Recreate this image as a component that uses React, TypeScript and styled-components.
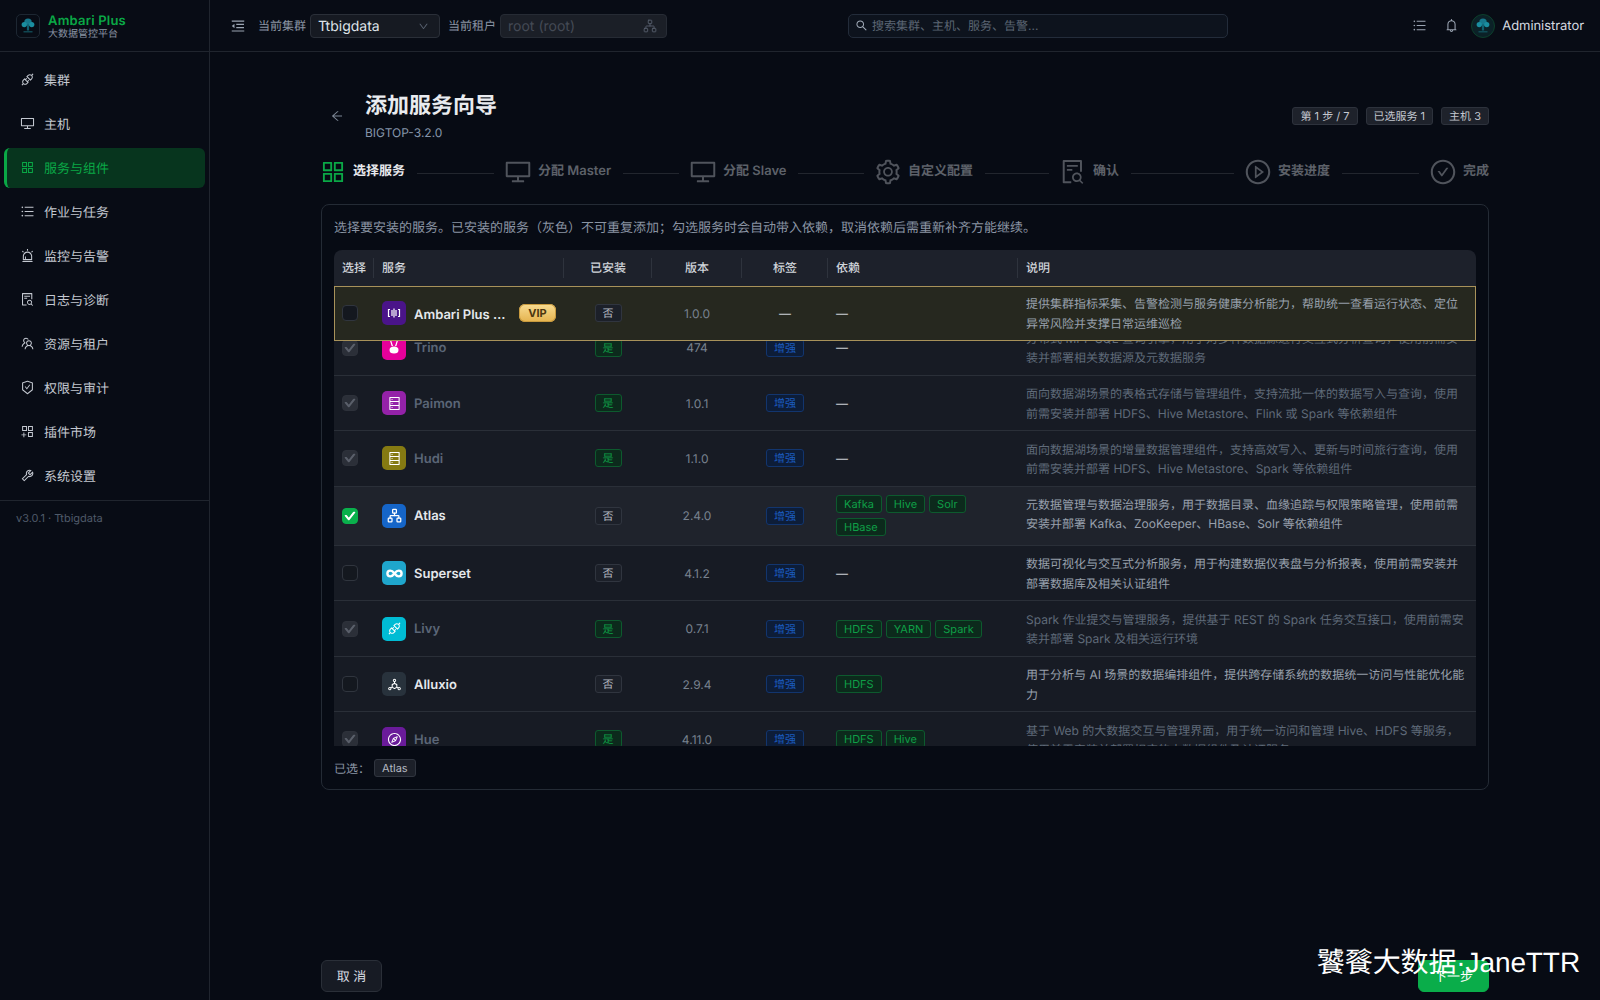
import React from 'react';
import styled, { createGlobalStyle } from 'styled-components';
import { Network } from 'lucide-react';
import {
    AiOutlineAlert,
    AiOutlineApi,
    AiOutlineAppstore,
    AiOutlineAppstoreAdd,
    AiOutlineArrowLeft,
    AiOutlineBell,
    AiOutlineCheck,
    AiOutlineCheckCircle,
    AiOutlineCompass,
    AiOutlineDatabase,
    AiOutlineDeploymentUnit,
    AiOutlineDesktop,
    AiOutlineDown,
    AiOutlineFileSearch,
    AiOutlineMenuFold,
    AiOutlinePlayCircle,
    AiOutlineSafetyCertificate,
    AiOutlineSearch,
    AiOutlineSetting,
    AiOutlineTeam,
    AiOutlineTool,
    AiOutlineUnorderedList,
} from 'react-icons/ai';

const GREEN = '#0aa846';

const GlobalStyle = createGlobalStyle`
  html, body {
    margin: 0;
    height: 100%;
    background: #070b14;
    overflow: hidden;
  }
  body, input, button {
    font-family: Inter, "Noto Sans CJK SC", sans-serif;
    text-rendering: geometricPrecision;
  }
  #root {
    height: 100%;
  }
  * {
    box-sizing: border-box;
  }
`;

const Shell = styled.div`
  display: flex;
  height: 1000px;
  position: relative;
  color: #d5d9e0;
`;

const Sidebar = styled.aside`
  width: 210px;
  flex: none;
  border-right: 1px solid #20252e;
  background: #080c15;
`;

const Brand = styled.div`
  height: 52px;
  display: flex;
  align-items: center;
  gap: 8px;
  padding: 0 16px;
  border-bottom: 1px solid #20252e;
`;

const BrandLogo = styled.div`
  width: 24px;
  height: 24px;
  display: flex;
  align-items: center;
  justify-content: center;
  border: 1px solid #1d2732;
  border-radius: 5px;
`;

const BrandText = styled.div`
  display: flex;
  flex-direction: column;
  padding-top: 2px;
`;

const BrandName = styled.span`
  color: ${GREEN};
  font-size: 13px;
  font-weight: 600;
  line-height: 14px;
  letter-spacing: 0.2px;
`;

const BrandSub = styled.span`
  color: #8a94a3;
  font-size: 10px;
  line-height: 12px;
`;

const NavList = styled.nav`
  display: flex;
  flex-direction: column;
  gap: 4px;
  padding: 8px 4px 4px;
  border-bottom: 1px solid #20252e;
`;

const NavItem = styled.div<{ $active?: boolean }>`
  height: 40px;
  display: flex;
  align-items: center;
  gap: 9px;
  padding-left: 13px;
  font-size: 13px;
  border-radius: 6px;
  color: ${({ $active }) => ($active ? GREEN : '#c3c8d0')};
  background: ${({ $active }) => ($active ? '#07351e' : 'transparent')};
  border-left: 3px solid ${({ $active }) => ($active ? GREEN : 'transparent')};
  svg {
    font-size: 15px;
    flex: none;
    margin-top: -1px;
  }
`;

const NavLabel = styled.span`
  padding-bottom: 2px;
`;

const SideVersion = styled.div`
  padding: 10px 16px;
  color: #4f5a69;
  font-size: 11px;
  line-height: 15px;
`;

const Main = styled.div`
  flex: 1;
  min-width: 0;
  display: flex;
  flex-direction: column;
`;

const TopBar = styled.header`
  height: 52px;
  flex: none;
  display: flex;
  align-items: center;
  padding: 0 16px 0 20px;
  border-bottom: 1px solid #20252e;
  background: #080c15;
`;

const Collapse = styled.span`
  display: flex;
  color: #9aa4b2;
  font-size: 16px;
  margin-right: 12px;
`;

const FieldLabel = styled.span`
  color: #8a94a3;
  font-size: 12px;
  margin-right: 4px;
`;

const Select = styled.div<{ $disabled?: boolean }>`
  height: 24px;
  width: ${({ $disabled }) => ($disabled ? '167px' : '130px')};
  margin-right: ${({ $disabled }) => ($disabled ? '0' : '8px')};
  display: flex;
  align-items: center;
  justify-content: space-between;
  padding: 1px ${({ $disabled }) => ($disabled ? '9px' : '10px')} 0 7px;
  border: 1px solid ${({ $disabled }) => ($disabled ? '#262b34' : '#2a2f38')};
  border-radius: 4px;
  background: ${({ $disabled }) => ($disabled ? '#1b1f27' : '#161a22')};
  color: ${({ $disabled }) => ($disabled ? '#444a55' : '#dfe3e9')};
  font-size: 14px;
  svg {
    color: #596170;
    font-size: 11px;
  }
`;

const Search = styled.div`
  width: 380px;
  height: 24px;
  margin-left: 181px;
  display: flex;
  align-items: center;
  gap: 4px;
  padding: 0 5px 0 6px;
  border: 1px solid #232c3a;
  border-radius: 5px;
  background: #0d131d;
  color: #5b6573;
  font-size: 12px;
  svg {
    color: #a3adba;
    font-size: 13px;
  }
`;

const TopActions = styled.div`
  margin-left: auto;
  display: flex;
  align-items: center;
  color: #9aa4b2;
  font-size: 15px;
  gap: 17px;
  svg {
    display: block;
  }
`;

const UserBlock = styled.div`
  display: flex;
  align-items: center;
  gap: 7px;
  margin-left: -5px;
  color: #d5d9e0;
  font-size: 13px;
  letter-spacing: -0.05px;
`;

const UserName = styled.span`
  padding-top: 1px;
`;

const Avatar = styled.div`
  width: 24px;
  height: 24px;
  display: flex;
  align-items: center;
  justify-content: center;
  border-radius: 50%;
  border: 1px solid #0c3f2b;
  background: #0b2127;
`;

const Content = styled.main`
  flex: 1;
  width: 1168px;
  margin: 0 auto;
  display: flex;
  flex-direction: column;
  padding: 38px 0 8px;
`;

const PageHead = styled.div`
  display: flex;
  align-items: center;
`;

const BackIcon = styled.span`
  display: flex;
  width: 44px;
  padding-left: 9px;
  color: #7d8795;
  font-size: 14px;
`;

const Titles = styled.div`
  flex: 1;
`;

const PageTitle = styled.h1`
  margin: 0;
  padding-top: 1px;
  color: #e9ebef;
  font-size: 22px;
  font-weight: 600;
  line-height: 30px;
`;

const PageSub = styled.div`
  margin-top: 3px;
  color: #8494a9;
  font-size: 12px;
  line-height: 18px;
`;

const HeadTags = styled.div`
  display: flex;
  gap: 8px;
`;

const HeadTag = styled.span`
  height: 18px;
  display: flex;
  align-items: center;
  padding: 0 7px;
  border: 1px solid #2d323c;
  border-radius: 3px;
  background: #1e222b;
  color: #c4c8d0;
  font-size: 11px;
`;

const Steps = styled.div`
  display: flex;
  margin-top: 18px;
  height: 24px;
`;

const Step = styled.div<{ $last?: boolean }>`
  flex: ${({ $last }) => ($last ? 'none' : '1 1 0')};
  display: flex;
  align-items: center;
  min-width: 0;
`;

const StepIcon = styled.span<{ $active?: boolean }>`
  width: 24px;
  height: 24px;
  display: flex;
  align-items: center;
  justify-content: center;
  flex: none;
  margin-right: 8px;
  color: ${({ $active }) => ($active ? GREEN : '#50545c')};
  font-size: 28px;
  svg {
    flex: none;
  }
`;

const StepLabel = styled.span<{ $active?: boolean }>`
  padding-bottom: 6px;
  white-space: nowrap;
  color: ${({ $active }) => ($active ? '#e6e8ec' : '#5d6169')};
  font-size: 13px;
  font-weight: 600;
`;

const StepLine = styled.span`
  flex: 1;
  height: 1px;
  margin: 2px 12px 0;
  background: #22262e;
`;

const Panel = styled.section`
  margin-top: 20px;
  padding: 12px 12px 12px;
  border: 1px solid #242b35;
  border-radius: 8px;
  background: #070b14;
`;

const Intro = styled.p`
  margin: 0 0 11px;
  color: #8a94a3;
  font-size: 13px;
  line-height: 22px;
`;

const COLUMNS = '40px 190px 88px 90px 86px 190px minmax(0, 1fr)';

const TableHead = styled.div`
  display: grid;
  grid-template-columns: ${COLUMNS};
  height: 36px;
  border-radius: 8px 8px 0 0;
  background: #1d212b;
`;

const HeadCell = styled.div<{ $center?: boolean; $divided?: boolean }>`
  display: flex;
  align-items: center;
  justify-content: ${({ $center }) => ($center ? 'center' : 'flex-start')};
  padding: 0 8px 2px;
  color: #d0d4da;
  font-size: 12px;
  font-weight: 500;
  position: relative;
  &::before {
    content: ${({ $divided }) => ($divided ? '""' : 'none')};
    position: absolute;
    left: -1px;
    top: 8px;
    bottom: 8px;
    width: 1px;
    background: #2e333d;
  }
`;

const TableBody = styled.div`
  height: 460px;
  overflow: hidden;
  background: #171b24;
`;

const Row = styled.div<{ $vip?: boolean; $selected?: boolean; $tuck?: number }>`
  display: grid;
  grid-template-columns: ${COLUMNS};
  position: ${({ $vip }) => ($vip ? 'relative' : 'static')};
  z-index: ${({ $vip }) => ($vip ? 1 : 'auto')};
  margin-top: ${({ $tuck }) => ($tuck ? `-${$tuck}px` : 0)};
  outline: ${({ $vip }) => ($vip ? '1px solid #a8925a' : 'none')};
  outline-offset: -1px;
  border-bottom: 1px solid ${({ $vip }) => ($vip ? '#a8925a' : '#2a2f38')};
  background: ${({ $vip, $selected }) => {
    if ($vip) return '#26281f';
    return $selected ? '#1f232c' : '#171b24';
  }};
`;

const Cell = styled.div<{ $center?: boolean }>`
  display: flex;
  align-items: center;
  min-width: 0;
  padding: 0 8px;
  justify-content: ${({ $center }) => ($center ? 'center' : 'flex-start')};
`;

const CheckBox = styled.span<{ $state: 'off' | 'on' | 'locked' }>`
  width: 16px;
  height: 16px;
  display: flex;
  align-items: center;
  justify-content: center;
  border-radius: 4px;
  border: 1px solid ${({ $state }) => {
    if ($state === 'on') return '#0ab04c';
    return $state === 'locked' ? '#2d313a' : '#30353e';
  }};
  background: ${({ $state }) => {
    if ($state === 'on') return '#0ab04c';
    return $state === 'locked' ? '#2b2f38' : '#14181f';
  }};
  color: ${({ $state }) => ($state === 'on' ? '#fff' : '#5a5f6a')};
  font-size: 12px;
  svg path {
    stroke: currentColor;
    stroke-width: 90;
  }
`;

const ServiceCell = styled(Cell)`
  gap: 8px;
`;

const ServiceIcon = styled.span<{ $color: string }>`
  width: 24px;
  height: 24px;
  flex: none;
  display: flex;
  align-items: center;
  justify-content: center;
  border-radius: 5px;
  background: ${({ $color }) => $color};
  color: #fff;
  font-size: 15px;
`;

const ServiceName = styled.span<{ $muted?: boolean }>`
  flex: 1;
  min-width: 0;
  padding-top: 1px;
  overflow: hidden;
  white-space: nowrap;
  text-overflow: ellipsis;
  color: ${({ $muted }) => ($muted ? '#5b6677' : '#e5e8ec')};
  font-size: 13px;
  font-weight: 600;
`;

const VipBadge = styled.span`
  flex: none;
  width: 37px;
  height: 18px;
  display: flex;
  align-items: center;
  justify-content: center;
  border-radius: 6px;
  background: linear-gradient(180deg, #f8dc92, #e5b34e);
  box-shadow: 0 0 0 1px #c89a3e inset;
  color: #4c3710;
  font-size: 11px;
  font-weight: 700;
`;

const Tag = styled.span<{ $tone: 'gray' | 'green' | 'blue' }>`
  height: 18px;
  display: inline-flex;
  align-items: center;
  padding: 0 7px;
  border-radius: 3px;
  font-size: 11px;
  white-space: nowrap;
  border: 1px solid ${({ $tone }) => ({ gray: '#30353f', green: '#0d5a2e', blue: '#12356e' }[$tone])};
  background: ${({ $tone }) => ({ gray: '#1c2029', green: '#0c2a1c', blue: '#0d1d38' }[$tone])};
  color: ${({ $tone }) => ({ gray: '#b4b9c2', green: '#0f9f47', blue: '#1b5cc0' }[$tone])};
`;

const VersionText = styled.span`
  color: #78828f;
  font-size: 12px;
`;

const Dash = styled.span`
  color: #c9cdd3;
  font-size: 12px;
`;

const DepCell = styled(Cell)`
  flex-wrap: wrap;
  align-content: center;
  gap: 5px 4px;
  padding: 8.7px 8px;
`;

const Desc = styled.div<{ $muted?: boolean }>`
  padding: 8.3px 8px 7.1px;
  color: ${({ $muted }) => ($muted ? '#5f6a79' : '#98a0ac')};
  font-size: 12px;
  line-height: 19.5px;
`;

const Chosen = styled.div`
  margin-top: 13px;
  display: flex;
  align-items: center;
  gap: 4px;
  color: #8a94a3;
  font-size: 12px;
`;

const Footer = styled.footer`
  margin-top: auto;
  display: flex;
  justify-content: space-between;
`;

const Button = styled.button<{ $primary?: boolean }>`
  height: 32px;
  border-radius: 6px;
  font-size: 13px;
  border: 1px solid ${({ $primary }) => ($primary ? '#0aad4a' : '#2a2f38')};
  background: ${({ $primary }) => ($primary ? '#0aad4a' : '#171b24')};
  color: ${({ $primary }) => ($primary ? '#fff' : '#d5d9e0')};
  width: ${({ $primary }) => ($primary ? '71px' : '61px')};
  padding: 0 0 1px;
`;

const Watermark = styled.div`
  position: absolute;
  right: 20px;
  bottom: 20px;
  color: #fff;
  font-family: "Liberation Sans", "Noto Sans CJK SC", sans-serif;
  font-size: 28px;
  line-height: 34px;
  letter-spacing: -0.1px;
  white-space: nowrap;
`;

const TreeLogo = ({ size }: { size: number }) => (
    <svg width={size} height={size} viewBox="0 0 24 24" fill="none">
        <circle cx="12" cy="7" r="5" fill="#17788c" />
        <circle cx="7" cy="10" r="3.5" fill="#1a8ea0" />
        <circle cx="17" cy="10" r="3.5" fill="#1a8ea0" />
        <rect x="10.5" y="10" width="3" height="8" fill="#0f5f70" />
        <rect x="6" y="19" width="12" height="1.5" fill="#135a66" />
    </svg>
);

const WaveIcon = () => (
    <svg width="14" height="14" viewBox="0 0 14 14" fill="none" stroke="#fff" strokeWidth="1.2">
        <path d="M3 3.5H1.5v7H3M11 3.5h1.5v7H11" />
        <path d="M5 4v6M9 4v6M7 2.5v9" />
    </svg>
);

const BunnyIcon = () => (
    <svg width="16" height="18" viewBox="0 0 16 18" fill="#fff">
        <path d="M5 1l2 6H5.6L4 1.6zM11 1L9 7h1.4L12 1.6z" />
        <ellipse cx="8" cy="11" rx="4.5" ry="3.6" />
    </svg>
);

const InfinityIcon = () => (
    <svg width="17" height="17" viewBox="0 0 24 24" fill="none" stroke="#fff" strokeWidth="3.4" strokeLinecap="round">
        <path d="M12 12c-2-2.7-4-4-6-4a4 4 0 0 0 0 8c2 0 4-1.3 6-4zm0 0c2 2.7 4 4 6 4a4 4 0 0 0 0-8c-2 0-4 1.3-6 4z" />
    </svg>
);

const navItems = [
    { label: '集群', icon: <AiOutlineApi /> },
    { label: '主机', icon: <AiOutlineDesktop /> },
    { label: '服务与组件', icon: <AiOutlineAppstore />, active: true },
    { label: '作业与任务', icon: <AiOutlineUnorderedList /> },
    { label: '监控与告警', icon: <AiOutlineAlert /> },
    { label: '日志与诊断', icon: <AiOutlineFileSearch /> },
    { label: '资源与租户', icon: <AiOutlineTeam /> },
    { label: '权限与审计', icon: <AiOutlineSafetyCertificate /> },
    { label: '插件市场', icon: <AiOutlineAppstoreAdd /> },
    { label: '系统设置', icon: <AiOutlineTool /> },
];

const steps = [
    { label: '选择服务', icon: <AiOutlineAppstore />, active: true },
    { label: '分配 Master', icon: <AiOutlineDesktop /> },
    { label: '分配 Slave', icon: <AiOutlineDesktop /> },
    { label: '自定义配置', icon: <AiOutlineSetting /> },
    { label: '确认', icon: <AiOutlineFileSearch /> },
    { label: '安装进度', icon: <AiOutlinePlayCircle /> },
    { label: '完成', icon: <AiOutlineCheckCircle /> },
];

type Service = {
    name: string;
    color: string;
    icon: React.ReactNode;
    installed: boolean;
    version: string;
    enhanced?: boolean;
    deps: string[];
    desc: string;
    selected?: boolean;
};

const vipService: Service = {
    name: 'Ambari Plus 智能运维',
    color: '#4a1489',
    icon: <WaveIcon />,
    installed: false,
    version: '1.0.0',
    deps: [],
    desc: '提供集群指标采集、告警检测与服务健康分析能力，帮助统一查看运行状态、定位异常风险并支撑日常运维巡检',
};

const services: Service[] = [
    {
        name: 'Trino',
        color: '#e6009a',
        icon: <BunnyIcon />,
        installed: true,
        version: '474',
        enhanced: true,
        deps: [],
        desc: '分布式 MPP SQL 查询引擎，用于对多种数据源进行交互式分析查询，使用前需安装并部署相关数据源及元数据服务',
    },
    {
        name: 'Paimon',
        color: '#9422a8',
        icon: <AiOutlineDatabase />,
        installed: true,
        version: '1.0.1',
        enhanced: true,
        deps: [],
        desc: '面向数据湖场景的表格式存储与管理组件，支持流批一体的数据写入与查询，使用前需安装并部署 HDFS、Hive Metastore、Flink 或 Spark 等依赖组件',
    },
    {
        name: 'Hudi',
        color: '#857a12',
        icon: <AiOutlineDatabase />,
        installed: true,
        version: '1.1.0',
        enhanced: true,
        deps: [],
        desc: '面向数据湖场景的增量数据管理组件，支持高效写入、更新与时间旅行查询，使用前需安装并部署 HDFS、Hive Metastore、Spark 等依赖组件',
    },
    {
        name: 'Atlas',
        color: '#1565c8',
        icon: <Network size={15} strokeWidth={2} />,
        installed: false,
        selected: true,
        version: '2.4.0',
        enhanced: true,
        deps: ['Kafka', 'Hive', 'Solr', 'HBase'],
        desc: '元数据管理与数据治理服务，用于数据目录、血缘追踪与权限策略管理，使用前需安装并部署 Kafka、ZooKeeper、HBase、Solr 等依赖组件',
    },
    {
        name: 'Superset',
        color: '#1fa6cc',
        icon: <InfinityIcon />,
        installed: false,
        version: '4.1.2',
        enhanced: true,
        deps: [],
        desc: '数据可视化与交互式分析服务，用于构建数据仪表盘与分析报表，使用前需安装并部署数据库及相关认证组件',
    },
    {
        name: 'Livy',
        color: '#00bcd4',
        icon: <AiOutlineApi />,
        installed: true,
        version: '0.7.1',
        enhanced: true,
        deps: ['HDFS', 'YARN', 'Spark'],
        desc: 'Spark 作业提交与管理服务，提供基于 REST 的 Spark 任务交互接口，使用前需安装并部署 Spark 及相关运行环境',
    },
    {
        name: 'Alluxio',
        color: '#28323c',
        icon: <AiOutlineDeploymentUnit />,
        installed: false,
        version: '2.9.4',
        enhanced: true,
        deps: ['HDFS'],
        desc: '用于分析与 AI 场景的数据编排组件，提供跨存储系统的数据统一访问与性能优化能力',
    },
    {
        name: 'Hue',
        color: '#6a1b9a',
        icon: <AiOutlineCompass />,
        installed: true,
        version: '4.11.0',
        enhanced: true,
        deps: ['HDFS', 'Hive'],
        desc: '基于 Web 的大数据交互与管理界面，用于统一访问和管理 Hive、HDFS 等服务，使用前需安装并部署相应的大数据组件及认证服务',
    },
];

const ServiceRow = ({ service, vip, tuck }: { service: Service; vip?: boolean; tuck?: number }) => {
    let state: 'off' | 'on' | 'locked' = 'off';
    if (service.installed) state = 'locked';
    if (service.selected) state = 'on';
    return (
        <Row $vip={vip} $selected={service.selected} $tuck={tuck}>
            <Cell>
                <CheckBox $state={state}>{state !== 'off' && <AiOutlineCheck />}</CheckBox>
            </Cell>
            <ServiceCell>
                <ServiceIcon $color={service.color}>{service.icon}</ServiceIcon>
                <ServiceName $muted={service.installed}>{service.name}</ServiceName>
                {vip && <VipBadge>VIP</VipBadge>}
            </ServiceCell>
            <Cell $center>
                <Tag $tone={service.installed ? 'green' : 'gray'}>{service.installed ? '是' : '否'}</Tag>
            </Cell>
            <Cell $center>
                <VersionText>{service.version}</VersionText>
            </Cell>
            <Cell $center>
                {service.enhanced ? <Tag $tone="blue">增强</Tag> : <Dash>—</Dash>}
            </Cell>
            <DepCell>
                {service.deps.length === 0 && <Dash>—</Dash>}
                {service.deps.map((dep) => (
                    <Tag $tone="green" key={dep}>{dep}</Tag>
                ))}
            </DepCell>
            <Desc $muted={service.installed}>{service.desc}</Desc>
        </Row>
    );
};

export default function App() {
    return (
        <Shell>
            <GlobalStyle />
            <Sidebar>
                <Brand>
                    <BrandLogo><TreeLogo size={18} /></BrandLogo>
                    <BrandText>
                        <BrandName>Ambari Plus</BrandName>
                        <BrandSub>大数据管控平台</BrandSub>
                    </BrandText>
                </Brand>
                <NavList>
                    {navItems.map((item) => (
                        <NavItem $active={item.active} key={item.label}>
                            {item.icon}
                            <NavLabel>{item.label}</NavLabel>
                        </NavItem>
                    ))}
                </NavList>
                <SideVersion>v3.0.1 · Ttbigdata</SideVersion>
            </Sidebar>
            <Main>
                <TopBar>
                    <Collapse><AiOutlineMenuFold /></Collapse>
                    <FieldLabel>当前集群</FieldLabel>
                    <Select>
                        Ttbigdata
                        <AiOutlineDown />
                    </Select>
                    <FieldLabel>当前租户</FieldLabel>
                    <Select $disabled>
                        root (root)
                        <Network size={14} strokeWidth={1.5} />
                    </Select>
                    <Search>
                        <AiOutlineSearch />
                        搜索集群、主机、服务、告警...
                    </Search>
                    <TopActions>
                        <AiOutlineUnorderedList />
                        <AiOutlineBell />
                        <UserBlock>
                            <Avatar><TreeLogo size={18} /></Avatar>
                            <UserName>Administrator</UserName>
                        </UserBlock>
                    </TopActions>
                </TopBar>
                <Content>
                    <PageHead>
                        <BackIcon><AiOutlineArrowLeft /></BackIcon>
                        <Titles>
                            <PageTitle>添加服务向导</PageTitle>
                            <PageSub>BIGTOP-3.2.0</PageSub>
                        </Titles>
                        <HeadTags>
                            <HeadTag>第 1 步 / 7</HeadTag>
                            <HeadTag>已选服务 1</HeadTag>
                            <HeadTag>主机 3</HeadTag>
                        </HeadTags>
                    </PageHead>
                    <Steps>
                        {steps.map((step, index) => {
                            const last = index === steps.length - 1;
                            return (
                                <Step $last={last} key={step.label}>
                                    <StepIcon $active={step.active}>{step.icon}</StepIcon>
                                    <StepLabel $active={step.active}>{step.label}</StepLabel>
                                    {!last && <StepLine />}
                                </Step>
                            );
                        })}
                    </Steps>
                    <Panel>
                        <Intro>选择要安装的服务。已安装的服务（灰色）不可重复添加；勾选服务时会自动带入依赖，取消依赖后需重新补齐方能继续。</Intro>
                        <TableHead>
                            <HeadCell>选择</HeadCell>
                            <HeadCell $divided>服务</HeadCell>
                            <HeadCell $divided $center>已安装</HeadCell>
                            <HeadCell $divided $center>版本</HeadCell>
                            <HeadCell $divided $center>标签</HeadCell>
                            <HeadCell $divided>依赖</HeadCell>
                            <HeadCell $divided>说明</HeadCell>
                        </TableHead>
                        <TableBody>
                            <ServiceRow service={vipService} vip />
                            {services.map((service, index) => (
                                <ServiceRow service={service} tuck={index === 0 ? 20.9 : 0} key={service.name} />
                            ))}
                        </TableBody>
                        <Chosen>
                            已选：
                            <Tag $tone="gray">Atlas</Tag>
                        </Chosen>
                    </Panel>
                    <Footer>
                        <Button>取 消</Button>
                        <Button $primary>下一步</Button>
                    </Footer>
                </Content>
            </Main>
            <Watermark>饕餮大数据·JaneTTR</Watermark>
        </Shell>
    );
}
